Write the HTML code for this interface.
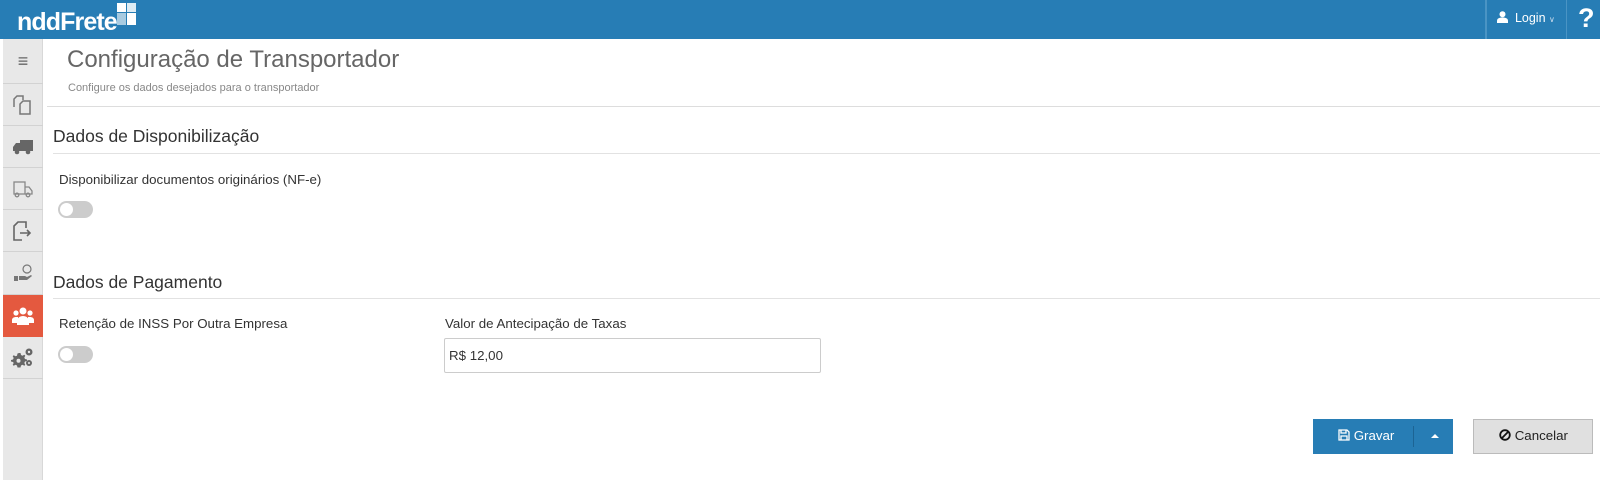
<!DOCTYPE html>
<html><head><meta charset="utf-8"><style>
*{box-sizing:border-box;margin:0;padding:0}
html,body{width:1600px;height:480px;overflow:hidden}
body{background:#fff;font-family:"Liberation Sans",sans-serif;color:#333;position:relative}
.hdr{position:absolute;left:0;top:0;width:1600px;height:39px;background:#277db5}
.logo{position:absolute;left:17px;top:8px;color:#fff;font-size:25px;font-weight:bold;letter-spacing:-0.9px}
.sq{position:absolute;background:#fff}
.side{position:absolute;left:3px;top:39px;width:40px;height:441px;background:#e8e8e8;border-right:1px solid #d8d8d8}
.it{position:absolute;left:0;width:40px;height:42px;border-bottom:1px solid #d2d2d2;display:flex;align-items:center;justify-content:center;color:#666}
.abs{position:absolute;white-space:nowrap}
.line{position:absolute;height:1px;background:#ddd}
.tg{position:absolute;width:35px;height:17px;border-radius:9px;background:#ccc}
.tg:after{content:"";position:absolute;left:2px;top:2px;width:13px;height:13px;border-radius:50%;background:#fff}
</style></head><body>
<div class="hdr">
 <div class="logo">nddFrete</div>
 <div class="sq" style="left:117px;top:3px;width:9px;height:9px"></div>
 <div class="sq" style="left:127px;top:3px;width:9px;height:9px;opacity:.85"></div>
 <div class="sq" style="left:127px;top:13px;width:9px;height:12px"></div>
 <div class="sq" style="left:117px;top:13px;width:9px;height:12px;opacity:.6"></div>
 <div style="position:absolute;left:1485px;top:0;width:2px;height:39px;background:#4a94c4"></div>
 <div style="position:absolute;left:1566px;top:0;width:1px;height:39px;background:#4a94c4"></div>
 <div class="abs" style="left:1497px;top:11px;color:#fff;font-size:12.5px"><svg width="11" height="12" viewBox="0 0 11 12" fill="#fff" style="vertical-align:-1px"><circle cx="5.5" cy="3.2" r="3"/><path d="M0 12v-2c0-2.5 2-3.5 5.5-3.5S11 7.5 11 10v2z"/></svg>&nbsp; Login <span style="font-size:8px;color:#cde">&#8744;</span></div>
 <div class="abs" style="left:1578px;top:3px;color:#fff;font-size:27px;font-weight:bold">?</div>
</div>
<div class="side">
 <div class="it" style="top:0;height:45px;font-size:18px">&#8801;</div>
 <div class="it" style="top:45px"><svg width="22" height="20" viewBox="0 0 22 20" fill="none" stroke="#777" stroke-width="1.5"><path d="M2 12V4l3-3h6v4"/><path d="M8 19V9l3-3h7v13z"/></svg></div>
 <div class="it" style="top:87px"><svg width="22" height="16" viewBox="0 0 22 16" fill="#666"><rect x="8" y="1" width="13" height="10"/><path d="M1 8l3-4h4v8H1z"/><rect x="1" y="10" width="20" height="2"/><circle cx="5" cy="13" r="2.3"/><circle cx="16" cy="13" r="2.3"/></svg></div>
 <div class="it" style="top:129px"><svg width="22" height="18" viewBox="0 0 22 18" fill="none" stroke="#888" stroke-width="1.3"><rect x="2" y="2" width="11" height="12"/><path d="M13 7h4l3 4v3h-7"/><circle cx="5" cy="15" r="1.8"/><circle cx="16" cy="15" r="1.8"/></svg></div>
 <div class="it" style="top:171px"><svg width="22" height="20" viewBox="0 0 22 20" fill="none" stroke="#666" stroke-width="1.6"><path d="M10 19H2V5l4-4h8v6"/><path d="M8 12h10M15 9l3 3-3 3"/></svg></div>
 <div class="it" style="top:214px"><svg width="22" height="20" viewBox="0 0 22 20" fill="#777"><circle cx="15" cy="5" r="4" fill="none" stroke="#777" stroke-width="1.2"/><rect x="2" y="12" width="4" height="5"/><path d="M7 12h6l2 1 4-2 1 1-5 4H7z"/></svg></div>
 <div class="it" style="top:256px;background:#e4593f;border-bottom-color:#e4593f"><svg width="24" height="20" viewBox="0 0 24 20" fill="#fff"><circle cx="12" cy="5" r="3.5"/><circle cx="5" cy="7" r="2.6"/><circle cx="19" cy="7" r="2.6"/><path d="M6 19v-4c0-3 3-5 6-5s6 2 6 5v4z"/><path d="M1 17v-3c0-2 2-3 4-3h2v6zM23 17v-3c0-2-2-3-4-3h-2v6z"/></svg></div>
 <div class="it" style="top:298px"><svg width="24" height="22" viewBox="0 0 24 22" fill="#666"><path d="M8 6l1.5 0 .5 2 1.5.7 1.8-1 1 1-1 1.8.7 1.5 2 .5v1.5l-2 .5-.7 1.5 1 1.8-1 1-1.8-1-1.5.7-.5 2H6.5l-.5-2-1.5-.7-1.8 1-1-1 1-1.8L2 15l-2-.5V13l2-.5.7-1.5-1-1.8 1-1 1.8 1L6 8.7 6.5 6.5z"/><circle cx="7.5" cy="13.7" r="2" fill="#e8e8e8"/><circle cx="18" cy="5" r="3.5"/><circle cx="18" cy="16" r="3"/><circle cx="18" cy="5" r="1.2" fill="#e8e8e8"/><circle cx="18" cy="16" r="1" fill="#e8e8e8"/></svg></div>
</div>
<div class="abs" style="left:67px;top:46px;font-size:24px;color:#666">Configuração de Transportador</div>
<div class="abs" style="left:68px;top:82px;font-size:11px;color:#888">Configure os dados desejados para o transportador</div>
<div class="line" style="left:47px;top:106px;width:1553px"></div>
<div class="abs" style="left:53px;top:126px;font-size:17.5px;color:#333">Dados de Disponibilização</div>
<div class="line" style="left:53px;top:153px;width:1547px;background:#e2e2e2"></div>
<div class="abs" style="left:59px;top:172px;font-size:13.3px">Disponibilizar documentos originários (NF-e)</div>
<div class="tg" style="left:58px;top:201px"></div>
<div class="abs" style="left:53px;top:272px;font-size:17.5px">Dados de Pagamento</div>
<div class="line" style="left:53px;top:298px;width:1547px;background:#e2e2e2"></div>
<div class="abs" style="left:59px;top:316px;font-size:13.3px">Retenção de INSS Por Outra Empresa</div>
<div class="tg" style="left:58px;top:346px"></div>
<div class="abs" style="left:445px;top:316px;font-size:13.3px">Valor de Antecipação de Taxas</div>
<div style="position:absolute;left:444px;top:338px;width:377px;height:35px;border:1px solid #ccc;border-radius:2px"></div>
<div class="abs" style="left:449px;top:348px;font-size:13.3px">R$ 12,00</div>
<div style="position:absolute;left:1313px;top:419px;width:140px;height:35px;background:#277db5"></div>
<div style="position:absolute;left:1413px;top:426px;width:1px;height:21px;background:#1c6494"></div>
<div class="abs" style="left:1338px;top:428px;color:#fff;font-size:13.3px"><svg width="12" height="12" viewBox="0 0 12 12" fill="none" stroke="#fff" stroke-width="1.3" style="vertical-align:-1px"><path d="M1 1h8l2 2v8H1z"/><path d="M3 1v3h5V1M3 11V7h6v4"/></svg> Gravar</div>
<div style="position:absolute;left:1431px;top:434px;width:0;height:0;border-left:4px solid transparent;border-right:4px solid transparent;border-bottom:4px solid #fff"></div>
<div style="position:absolute;left:1473px;top:419px;width:120px;height:35px;background:#e0e0e0;border:1px solid #bbb"></div>
<div class="abs" style="left:1499px;top:428px;font-size:13.3px;color:#222"><svg width="12" height="12" viewBox="0 0 12 12" fill="none" stroke="#111" stroke-width="1.8" style="vertical-align:-1px"><circle cx="6" cy="6" r="4.8"/><path d="M2.8 9.2l6.4-6.4"/></svg> Cancelar</div>
</body></html>
